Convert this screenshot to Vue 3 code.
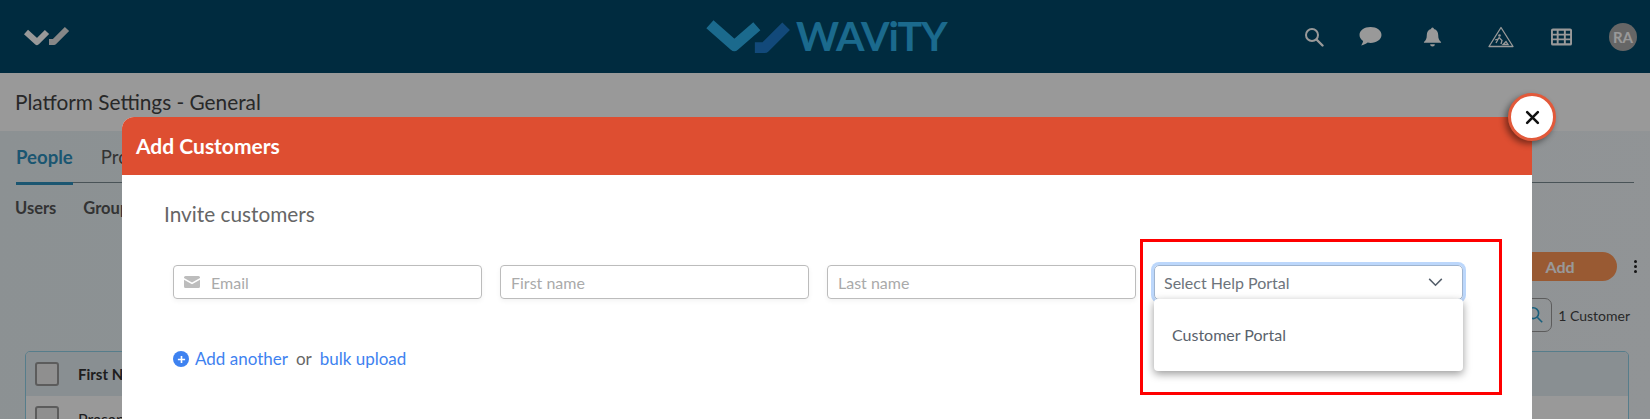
<template>
  <div class="page">
    <header class="navbar">
      <svg class="mini-logo" viewBox="0 0 46 20">
        <path d="M2 6 L13 16 L23 6" fill="none" stroke="#fff" stroke-width="6" stroke-linejoin="round" />
        <path d="M25 16 L30 16 L43 3" fill="none" stroke="#e2e2e2" stroke-width="6" stroke-linejoin="round" />
      </svg>
      <div class="brand">
        <svg class="brand-mark" viewBox="0 0 88 36">
          <path d="M4 6 L29 28 L52 8" fill="none" stroke="#2db1ec" stroke-width="11" stroke-linejoin="round" />
          <path d="M50 30 L60 30 L82 8" fill="none" stroke="#1e7bcb" stroke-width="11" stroke-linejoin="round" />
        </svg>
        <span class="brand-name">WAViTY</span>
      </div>
      <div class="nav-icons">
        <svg class="ic ic-search" viewBox="0 0 20 20">
          <circle cx="8" cy="8" r="6" fill="none" stroke="#fff" stroke-width="2" />
          <path d="M12.5 12.5 L18.5 18.5" stroke="#fff" stroke-width="2.4" stroke-linecap="round" />
        </svg>
        <svg class="ic ic-chat" viewBox="0 0 22 20">
          <path d="M11 1C5 1 .5 4.300 .5 8.500c0 2.300 1.300 4.300 3.400 5.700-.2 1.600-1 3-1.900 4.300 2.300-.3 4.600-1.300 6.300-2.700.9.200 1.800.3 2.700.3 6 0 10.500-3.400 10.500-7.600S17 1 11 1z" fill="#fff" />
        </svg>
        <svg class="ic ic-bell" viewBox="0 0 20 22">
          <path d="M10 1a1.500 1.500 0 0 1 1.500 1.600C14.600 3.300 16 6 16 9c0 4 1 5.500 3 7.200V17H1v-.8C3 14.500 4 13 4 9c0-3 1.400-5.700 4.500-6.400A1.500 1.500 0 0 1 10 1z" fill="#fff" />
          <path d="M7.500 18.500h5a2.500 2.500 0 0 1-5 0z" fill="#fff" />
        </svg>
        <svg class="ic ic-sign" viewBox="0 0 26 22">
          <path d="M13 1.500 L25 20.500 H1 Z" fill="none" stroke="#fff" stroke-width="1.300" stroke-linejoin="round" />
          <circle cx="11.500" cy="9.500" r="1.300" fill="#fff" />
          <path d="M11 11.500 L8 17 M11 11.500 L14 14.500 L13 18 M10 13 L7 14 M15 18.500 L20 18.500 L18 15.500 Z" fill="none" stroke="#fff" stroke-width="1.300" />
        </svg>
        <svg class="ic ic-grid" viewBox="0 0 22 18">
          <path fill-rule="evenodd" fill="#fff" d="M2 0h18a2 2 0 0 1 2 2v14a2 2 0 0 1-2 2H2a2 2 0 0 1-2-2V2a2 2 0 0 1 2-2zM2 2.500v3h4v-3zM8 2.500v3h5.500v-3zM15.500 2.500v3H20v-3zM2 7.500v3h4v-3zM8 7.500v3h5.500v-3zM15.500 7.500v3H20v-3zM2 12.500v3h4v-3zM8 12.500v3h5.500v-3zM15.500 12.500v3H20v-3z" />
        </svg>
        <span class="avatar">RA</span>
      </div>
    </header>

    <div class="title-bar">Platform Settings - General</div>

    <main class="content">
      <nav class="tabs">
        <span class="tab active">People</span>
        <span class="tab">Projects</span>
      </nav>
      <nav class="subtabs">
        <span>Users</span>
        <span>Groups</span>
      </nav>
      <div class="toolbar">
        <button class="add-btn">Add</button>
        <span class="kebab"><i></i><i></i><i></i></span>
      </div>
      <div class="count-row">
        <span class="search-box">
          <svg viewBox="0 0 20 20" width="18" height="18">
            <circle cx="8" cy="8" r="6" fill="none" stroke="#2a9fd0" stroke-width="1.800" />
            <path d="M12.500 12.500 L18 18" stroke="#2a9fd0" stroke-width="1.800" />
          </svg>
        </span>
        <span class="count">1 Customer</span>
      </div>
      <div class="table">
        <div class="row head"><span class="check"></span><span>First Name</span></div>
        <div class="row body-row"><span class="check"></span><span>Prasanna</span></div>
      </div>
    </main>

    <div class="overlay"></div>

    <section class="modal">
      <button class="close">
        <svg viewBox="0 0 14 14" width="15" height="15">
          <path d="M2 2 L12 12 M12 2 L2 12" stroke="#111" stroke-width="2.400" stroke-linecap="round" />
        </svg>
      </button>
      <h2 class="modal-head">Add Customers</h2>
      <div class="modal-body">
        <h3 class="invite">Invite customers</h3>
        <div class="fields">
          <div class="field email">
            <svg viewBox="0 0 16 12" width="16" height="12">
              <path d="M1.500 0h13A1.500 1.500 0 0 1 16 1.500v.5L8 6.500 0 2v-.5A1.500 1.500 0 0 1 1.500 0z" fill="#bdbdbd" />
              <path d="M0 3.800 8 8.300l8-4.500v6.700A1.500 1.500 0 0 1 14.500 12h-13A1.500 1.500 0 0 1 0 10.500z" fill="#bdbdbd" />
            </svg>
            <span>Email</span>
          </div>
          <div class="field"><span>First name</span></div>
          <div class="field"><span>Last name</span></div>
          <div class="select-wrap">
            <div class="select">
              <span>Select Help Portal</span>
              <svg viewBox="0 0 16 10" width="15" height="9">
                <path d="M1 1 L8 8 L15 1" fill="none" stroke="#555f6b" stroke-width="1.700" />
              </svg>
            </div>
            <div class="menu">Customer Portal</div>
          </div>
        </div>
        <div class="links">
          <span class="plus">
            <svg viewBox="0 0 10 10" width="9" height="9">
              <path d="M5 1 V9 M1 5 H9" stroke="#fff" stroke-width="1.800" />
            </svg>
          </span>
          <a class="link">Add another</a>
          <span class="or">or</span>
          <a class="link">bulk upload</a>
        </div>
      </div>
      <div class="highlight"></div>
    </section>
  </div>
</template>

<script setup>
</script>

<style>
html, body {
  margin: 0;
  overflow: hidden;
}
</style>

<style scoped>
.page {
  position: relative;
  width: 1650px;
  height: 419px;
  overflow: hidden;
  font-family: Lato, "Liberation Sans", sans-serif;
  background: #e8f1f5;
}

.navbar {
  height: 73px;
  background: #004969;
  display: flex;
  align-items: center;
  position: relative;
  padding: 0 13px 0 24px;
  box-sizing: border-box;
}
.mini-logo {
  width: 46px;
  height: 20px;
  margin-top: -1px;
}
.brand {
  position: absolute;
  left: 706px;
  top: 14px;
  display: flex;
  align-items: center;
  gap: 4px;
}
.brand-mark {
  width: 86px;
  height: 36px;
}
.brand-name {
  font-size: 41px;
  line-height: 44px;
  color: #2db1ec;
  letter-spacing: -1.100px;
  font-weight: 700;
}
.nav-icons {
  margin-left: auto;
  display: flex;
  align-items: center;
}
.ic {
  display: block;
  flex: none;
}
.ic-search { width: 20px; height: 20px; margin-right: 35px; }
.ic-chat { width: 23px; height: 21px; margin-right: 41px; }
.ic-bell { width: 19px; height: 22px; margin-right: 46px; }
.ic-sign { width: 26px; height: 22px; margin-right: 37px; }
.ic-grid { width: 21px; height: 18px; margin-right: 37px; }
.avatar {
  width: 28px;
  height: 28px;
  border-radius: 50%;
  background: #aaa;
  color: #fff;
  font-size: 15px;
  font-weight: 700;
  display: flex;
  align-items: center;
  justify-content: center;
}

.title-bar {
  height: 58px;
  background: #fff;
  box-sizing: border-box;
  padding: 15px 15px 0;
  font-size: 20.800px;
  line-height: 28px;
  color: #444;
}

.content {
  padding: 0 16px;
  background: linear-gradient(100deg, #e9f2f6, #f2f7fa);
  height: 288px;
  box-sizing: border-box;
}
.tabs {
  display: flex;
  gap: 28px;
  height: 52px;
  border-bottom: 1px solid #7a8a92;
  box-sizing: border-box;
  font-size: 18.600px;
  line-height: 26px;
  padding-top: 13px;
  color: #555;
}
.tab.active {
  color: #2e8fbc;
  font-weight: 700;
  height: 38px;
  border-bottom: 3px solid #2e8fbc;
  box-sizing: content-box;
}
.subtabs {
  display: flex;
  gap: 27px;
  font-size: 16.500px;
  font-weight: 700;
  color: #555;
  margin-top: 15px;
  line-height: 20px;
  margin-left: -1px;
}
.toolbar {
  margin-top: 34px;
  margin-right: -3px;
  display: flex;
  justify-content: flex-end;
  align-items: center;
  gap: 17px;
}
.add-btn {
  width: 114px;
  height: 29px;
  border: none;
  border-radius: 15px;
  background: #ff9655;
  color: #fff;
  font: 700 16px Lato, sans-serif;
}
.kebab {
  display: flex;
  flex-direction: column;
  gap: 2px;
}
.kebab i {
  width: 3px;
  height: 3px;
  border-radius: 50%;
  background: #222;
}
.count-row {
  margin-top: 17px;
  display: flex;
  justify-content: flex-end;
  align-items: center;
  gap: 6px;
  padding-right: 4px;
}
.search-box {
  width: 35px;
  height: 34px;
  box-sizing: border-box;
  border: 1px solid #999;
  border-radius: 7px;
  display: flex;
  align-items: center;
  justify-content: center;
}
.count {
  font-size: 14px;
  color: #444;
}
.table {
  margin: 19px 5px 0 9px;
  border: 1px solid #8fd0e8;
  border-radius: 5px;
  overflow: hidden;
}
.row {
  height: 44px;
  display: flex;
  align-items: center;
  gap: 19px;
  padding-left: 9px;
  font-size: 15px;
  background: #fff;
  color: #333;
}
.row.head {
  background: #e4eef3;
  font-weight: 700;
}
.row.body-row {
  font-size: 16px;
}
.check {
  width: 20px;
  height: 20px;
  border: 2px solid #999;
  border-radius: 3px;
  background: #eee;
}

.overlay {
  position: absolute;
  inset: 0;
  background: rgba(0, 0, 0, 0.4);
}

.modal {
  position: absolute;
  left: 122px;
  top: 117px;
  width: 1410px;
  height: 320px;
  background: #fff;
  border-radius: 12px 12px 0 0;
}
.modal-head {
  margin: 0;
  height: 58px;
  background: #de4e31;
  border-radius: 12px 12px 0 0;
  color: #fff;
  font-size: 21px;
  font-weight: 700;
  line-height: 58px;
  padding-left: 14px;
}
.close {
  position: absolute;
  right: -24px;
  top: -24px;
  width: 48px;
  height: 48px;
  padding: 0;
  border: 3px solid #e2593a;
  border-radius: 50%;
  background: #fff;
  box-shadow: -3px 3px 6px rgba(0, 0, 0, 0.45);
  display: flex;
  align-items: center;
  justify-content: center;
}
.modal-body {
  padding: 26px 42px 0;
}
.invite {
  margin: 0;
  font-size: 20.800px;
  font-weight: 400;
  line-height: 26px;
  color: #666;
}
.fields {
  display: flex;
  gap: 18px;
  margin: 38px 0 0 9px;
  align-items: flex-start;
}
.field {
  width: 309px;
  height: 34px;
  box-sizing: border-box;
  border: 1px solid #bcbcbc;
  border-radius: 4px;
  display: flex;
  align-items: center;
  gap: 11px;
  padding-left: 10px;
  font-size: 16px;
  color: #aaa;
  box-shadow: 0 2px 5px rgba(0, 0, 0, 0.05);
}
.select-wrap {
  width: 309px;
  position: relative;
}
.select {
  height: 35px;
  box-sizing: border-box;
  border: 1px solid #9fb4cf;
  border-radius: 5px;
  box-shadow: 0 0 0 3px #bcd7fb;
  padding: 0 19px 0 9px;
  display: flex;
  align-items: center;
  justify-content: space-between;
  font-size: 16px;
  color: #6d747c;
}
.menu {
  position: absolute;
  top: 34px;
  left: 0;
  right: 0;
  height: 72px;
  box-sizing: border-box;
  background: #fff;
  border-radius: 4px;
  padding-left: 18px;
  line-height: 72px;
  font-size: 16px;
  color: #5a626c;
  box-shadow: 0 3px 8px rgba(0, 0, 0, 0.4);
}
.links {
  margin: 47px 0 0 9px;
  display: flex;
  align-items: center;
  font-size: 17px;
  line-height: 24px;
}
.plus {
  width: 16px;
  height: 16px;
  border-radius: 50%;
  background: #3e82f0;
  display: flex;
  align-items: center;
  justify-content: center;
  margin-right: 6px;
}
.link {
  color: #3e82f0;
}
.or {
  color: #666;
  margin: 0 8px 0 8px;
}
.highlight {
  position: absolute;
  left: 1018px;
  top: 122px;
  width: 362px;
  height: 156px;
  box-sizing: border-box;
  border: 3px solid #f00;
  pointer-events: none;
}
</style>
